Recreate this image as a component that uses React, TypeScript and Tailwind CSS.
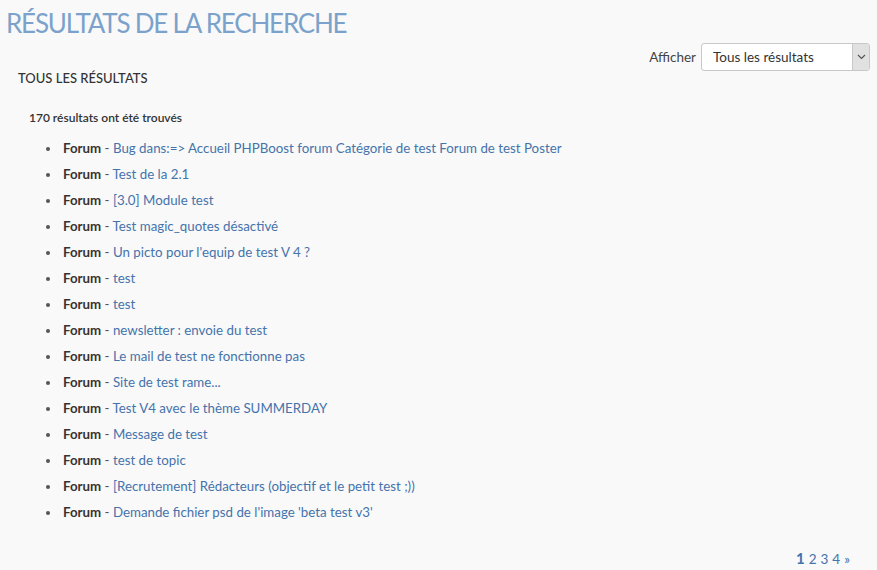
import React from "react";

const items = [
  "Bug dans:=> Accueil PHPBoost forum Catégorie de test Forum de test Poster",
  "Test de la 2.1",
  "[3.0] Module test",
  "Test magic_quotes désactivé",
  "Un picto pour l'equip de test V 4 ?",
  "test",
  "test",
  "newsletter : envoie du test",
  "Le mail de test ne fonctionne pas",
  "Site de test rame...",
  "Test V4 avec le thème SUMMERDAY",
  "Message de test",
  "test de topic",
  "[Recrutement] Rédacteurs (objectif et le petit test ;))",
  "Demande fichier psd de l'image 'beta test v3'",
];

export default function App() {
  return (
    <div
      className="w-[877px] h-[570px] bg-[#f9f9f9] text-[#333] overflow-hidden"
      style={{ fontFamily: "Lato, 'Open Sans', sans-serif" }}
    >
      <h1 className="pl-[6px] pt-[6px] text-[26px] leading-[34px] tracking-[-1.2px] text-[#7ba2cb] uppercase">
        Résultats de la recherche
      </h1>
      <div className="flex justify-end items-center pr-[7px] mt-[3px] h-[28px]">
        <span className="text-[13.5px] text-[#444] mr-[5px]">Afficher</span>
        <div className="w-[169px] h-[28px] border border-[#c8c8c8] rounded-[3px] bg-white flex items-stretch overflow-hidden">
          <span className="flex-1 pl-[11px] text-[13.5px] leading-[26px] text-[#333]">Tous les résultats</span>
          <span className="w-[17px] bg-[#e1e1e1] border-l border-[#c8c8c8] flex items-center justify-center">
            <svg width="9" height="6" viewBox="0 0 9 6">
              <path d="M1 1l3.5 3.5L8 1" fill="none" stroke="#555" strokeWidth="1.2" />
            </svg>
          </span>
        </div>
      </div>
      <div className="pl-[18px] -mt-[2px] text-[13px] leading-[18px] font-medium uppercase text-[#333]">Tous les résultats</div>
      <div className="pl-[29px] mt-[24px] text-[12px] leading-[14px] font-semibold text-[#333]">
        170 résultats ont été trouvés
      </div>
      <ul className="mt-[10px] pl-[61px] list-disc">
        {items.map((t, i) => (
          <li key={i} className="h-[26px] leading-[26px] text-[13.3px] pl-[2px] marker:text-[#555]">
            <span className="font-bold text-[#3a3230]">Forum</span>
            <span className="text-[#555]"> - </span>
            <a className="text-[#4573ab]">{t}</a>
          </li>
        ))}
      </ul>
      <div className="flex justify-end pr-[27px] mt-[22px] text-[13.5px] text-[#4573ab] gap-[4px] items-baseline">
        <span className="font-bold text-[15px]">1</span>
        <span>2</span>
        <span>3</span>
        <span>4</span>
        <span>»</span>
      </div>
    </div>
  );
}
